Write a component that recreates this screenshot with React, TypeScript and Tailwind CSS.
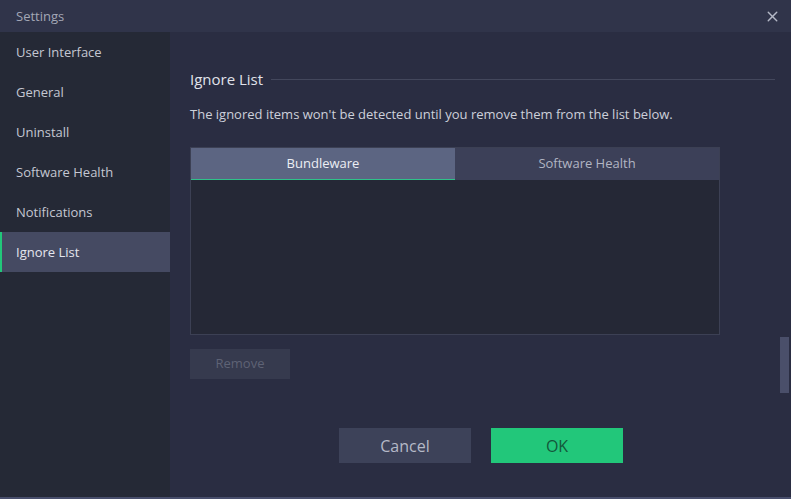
import { X } from 'lucide-react';

const navItems = ['User Interface', 'General', 'Uninstall', 'Software Health', 'Notifications', 'Ignore List'];

const App = () => {
  return (
    <div className="w-[791px] h-[499px] flex flex-col bg-[#2a2d42] text-[13px] overflow-hidden" style={{ fontFamily: '"Open Sans", "Noto Sans", sans-serif' }}>
      <div className="h-8 shrink-0 flex items-center justify-between bg-[#30344a] pl-4 pr-[10px] pt-px">
        <span className="text-[#a3a7b6]">Settings</span>
        <X className="w-[17px] h-[17px] text-[#b4b8c6]" strokeWidth={2} />
      </div>
      <div className="flex flex-1 min-h-0 border-b-2 border-[#484e6c]">
        <div className="w-[170px] shrink-0 bg-[#252936]">
          {navItems.map((item) => {
            const active = item === 'Ignore List';
            return (
              <div
                key={item}
                className={
                  active
                    ? 'h-10 flex items-center pl-[14px] pt-[2px] bg-[#454a62] text-[#e4e6ee] border-l-2 border-[#22c77a]'
                    : 'h-10 flex items-center pl-4 pt-[2px] text-[#c4c7d2]'
                }
              >
                {item}
              </div>
            );
          })}
        </div>
        <div className="flex-1 flex">
          <div className="flex-1 pl-5 pr-[5px] pt-[36px]">
            <div className="flex items-center gap-2">
              <span className="text-[15px] text-[#e0e2ea]">Ignore List</span>
              <div className="flex-1 h-px bg-[#43475c]" />
            </div>
            <p className="mt-[14px] text-[#cdd0da]">The ignored items won't be detected until you remove them from the list below.</p>
            <div className="mt-[23px] w-[530px] h-[188px] flex flex-col border border-[#3c4054] bg-[#252836]">
              <div className="h-8 flex shrink-0">
                <div className="flex-1 flex items-center justify-center bg-[#5c6582] text-[#eceef4] border-b border-[#2fc28a]">Bundleware</div>
                <div className="flex-1 flex items-center justify-center bg-[#3c4058] text-[#b1b5c3]">Software Health</div>
              </div>
            </div>
            <button className="mt-[14px] w-[100px] h-[30px] bg-[#363a4e] text-[#5e6275]">Remove</button>
            <div className="mt-[49px] flex gap-5 pl-[149px]">
              <button className="w-[132px] h-[35px] bg-[#3d4259] text-[#b5b9c7] text-[16px]">Cancel</button>
              <button className="w-[132px] h-[35px] bg-[#22c77a] text-[#14573a] text-[16px]">OK</button>
            </div>
          </div>
          <div className="w-[11px] pt-[305px]">
            <div className="h-[56px] w-[9px] bg-[#4a4f6a]" />
          </div>
        </div>
      </div>
    </div>
  );
};

export default App;
